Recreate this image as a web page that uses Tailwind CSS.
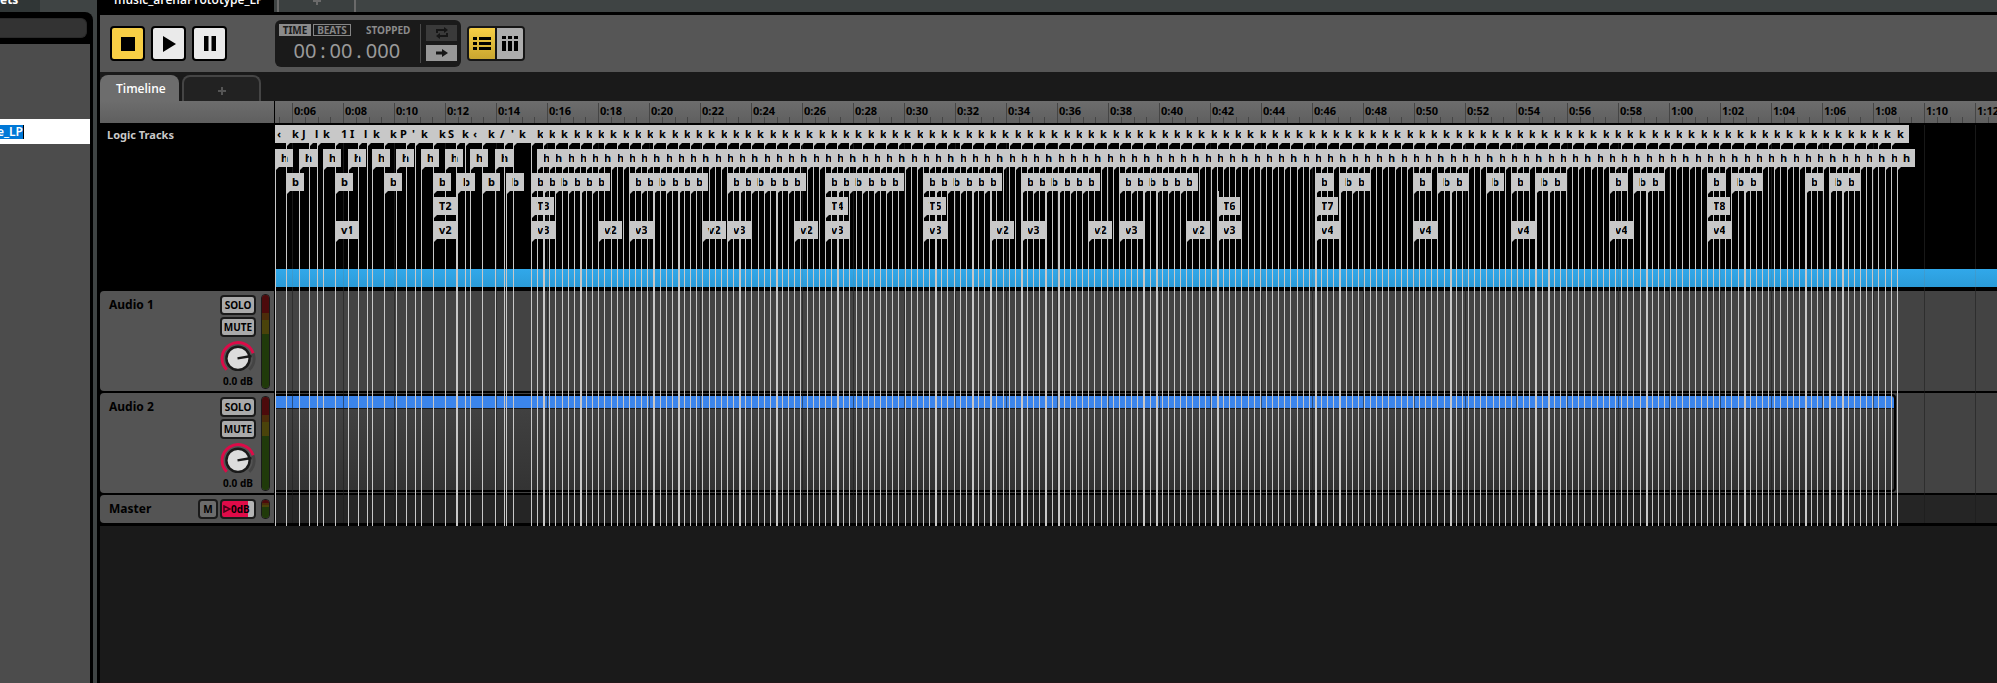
<!DOCTYPE html>
<html lang="en">
<head>
<meta charset="utf-8">
<title>Timeline editor</title>
<script src="https://cdn.jsdelivr.net/npm/@tailwindcss/browser@4"></script>
</head>
<body class="h-screen overflow-hidden bg-[#3f4444] font-['Noto_Sans','Open_Sans',sans-serif] text-xs text-black">
<div class="flex h-full">

  <!-- Browser panel -->
  <aside class="flex w-[93px] shrink-0 flex-col overflow-hidden">
    <div class="flex h-3 items-end overflow-hidden">
      <div class="flex h-3 w-10 items-end bg-[#303636] font-bold leading-4 text-white"><span class="pb-1">ets</span></div>
    </div>
    <div class="flex flex-1 flex-col rounded-tr-lg bg-black pr-[3px] pt-1.5">
      <div class="pr-[3px]"><input aria-label="Search" class="block h-5 w-full rounded-r-md border border-l-0 border-[#2a2a2a] bg-[#333] outline-none"></div>
      <div class="mt-1.5 flex-1 bg-[#4c4c4c] pt-[75px]">
        <div class="flex h-[25px] items-center bg-white">
          <div class="flex h-[14px] w-6 items-center justify-end overflow-hidden border-r border-black bg-[#0078d7] text-xs font-semibold leading-[14px] text-white"><span>e_LP</span></div>
        </div>
      </div>
    </div>
  </aside>

  <!-- Editor -->
  <main class="ml-1 flex min-w-0 flex-1 flex-col border-l-[3px] border-black bg-[#1a1a1a]">
    <div class="flex h-[15px] shrink-0 overflow-hidden border-b-[3px] border-black bg-[#3f4444]">
      <div class="flex h-3 w-[174px] items-end bg-black pl-3.5 font-['Open_Sans'] font-semibold leading-4 text-white"><span class="pb-1 text-xs">music_arenaPrototype_LP</span></div>
      <button aria-label="New event tab" class="ml-[3px] flex h-3 w-[79px] justify-center border-x-2 border-[#6a6a6a] bg-[#3b4040]">
        <svg class="h-1.5 w-2" viewBox="0 0 8 6"><path d="M3 0h2v5H3zM0 0h8v2H0z" fill="#6a6a6a"/></svg>
      </button>
    </div>

    <!-- Transport -->
    <div class="flex h-[57px] shrink-0 items-center bg-[#565656] pl-2.5">
      <div class="flex gap-1.5">
        <button aria-label="Stop" class="flex size-[35px] items-center justify-center rounded border-2 border-black bg-[#f8cf45]"><svg class="size-[14px]" viewBox="0 0 14 14"><path d="M0 0h14v14H0z"/></svg></button>
        <button aria-label="Play" class="flex size-[35px] items-center justify-center rounded border-2 border-black bg-[#eaeaea]"><svg class="size-4" viewBox="0 0 16 16"><path d="M2 0l13 8-13 8z"/></svg></button>
        <button aria-label="Pause" class="flex size-[35px] items-center justify-center rounded border-2 border-black bg-[#eaeaea]"><svg class="h-[15px] w-3" viewBox="0 0 12 15"><path d="M0 0h4.500v15H0zM7.500 0H12v15H7.500z"/></svg></button>
      </div>
      <div class="ml-12 flex h-[47px] w-[186px] rounded-md bg-[#1a1a1a] p-1">
        <div class="flex w-[142px] flex-col border-r border-[#4a4a4a]">
          <div class="flex h-3 items-center gap-0.5 text-[10px] font-bold leading-3">
            <button class="h-3 w-8 bg-[#8b8b8b] text-[#1a1a1a]">TIME</button>
            <button class="h-3 w-[38px] border border-[#858585] leading-[10px] text-[#858585]">BEATS</button>
            <span class="ml-[13px] text-[#8b8b8b]">STOPPED</span>
          </div>
          <div class="flex h-7 items-center pl-3.5 pt-0.5 text-[20px] leading-7 text-[#9a9a9a]">
            <span class="w-6 text-center">00</span><span class="w-3 text-center">:</span><span class="w-6 text-center">00</span><span class="w-3 text-center">.</span><span class="w-9 text-center">000</span>
          </div>
        </div>
        <div class="ml-[5px] flex flex-col gap-1 pt-px">
          <button aria-label="Loop" class="flex h-4 w-[31px] items-center justify-center bg-[#3a3a3a]"><svg class="h-3 w-[14px]" viewBox="0 0 14 12" fill="none" stroke="#161616" stroke-width="2"><path d="M2 6V3h8M12 6v3H4"/><path d="M9 0l4 3-4 3zM5 6L1 9l4 3z" fill="#161616" stroke="none"/></svg></button>
          <button aria-label="Follow playback" class="flex h-4 w-[31px] items-center justify-center bg-[#979797]"><svg class="h-2 w-[14px]" viewBox="0 0 14 8"><path d="M1 2.500h6V0l6 4-6 4V5.500H1z" fill="#161616"/></svg></button>
        </div>
      </div>
      <div class="ml-1.5 flex h-[35px] w-[58px] overflow-hidden rounded border-2 border-[#161616]">
        <button aria-label="List view" class="flex flex-1 items-center justify-center bg-gradient-to-b from-[#f8cf45] to-[#c9a630]"><svg class="h-[13px] w-[18px]" viewBox="0 0 18 13"><path d="M0 0h4v3H0zM6 0h12v3H6zM0 5h4v3H0zM6 5h12v3H6zM0 10h4v3H0zM6 10h12v3H6z"/></svg></button>
        <button aria-label="Column view" class="flex flex-1 items-center justify-center border-l-2 border-[#161616] bg-[#adadad]"><svg class="h-[15px] w-4" viewBox="0 0 16 15"><path d="M0 0h4v3H0zM6 0h4v3H6zM12 0h4v3h-4zM0 5h4v10H0zM6 5h4v10H6zM12 5h4v10h-4z"/></svg></button>
      </div>
    </div>

    <!-- Parameter tabs -->
    <div class="flex h-[29px] shrink-0 items-end gap-[3px]">
      <button class="flex h-[26px] w-[79px] items-center rounded-t-lg bg-[#6d6d6d] pl-4 pt-0.5 font-['Open_Sans'] text-xs font-semibold text-white">Timeline</button>
      <button aria-label="New parameter" class="flex h-[26px] w-[79px] items-center justify-center rounded-t-lg border-2 border-b-0 border-[#454545] bg-[#222]"><svg class="mt-1 size-2" viewBox="0 0 8 8"><path d="M3 0h2v3h3v2H5v3H3V5H0V3h3z" fill="#555"/></svg></button>
    </div>

    <div class="flex min-w-0">
      <!-- Track heads -->
      <div class="flex w-[175px] shrink-0 flex-col border-r border-black bg-black pb-[3px]">
        <div class="h-[22px] bg-gradient-to-b from-[#6d6d6d] to-[#5f5f5f]"></div>
        <div class="h-[168px] pl-[7px] pt-1"><h2 class="text-[11px] font-bold leading-4 text-[#c8c8c8]">Logic Tracks</h2></div>
        <div id="heads" class="flex flex-col gap-0.5"></div>
        <div class="mt-0.5 flex h-7 items-center rounded-l bg-[#545454] pl-[9px] pr-1">
          <span class="text-xs font-bold">Master</span>
          <button class="ml-auto h-5 w-5 rounded border-2 border-[#1a1a1a] bg-[#6c6c6c] text-[10px] font-bold leading-4">M</button>
          <button aria-label="Master volume" class="ml-0.5 flex h-5 w-9 items-center rounded border-2 border-[#1a1a1a] bg-gradient-to-r from-[#e00b49] from-82% to-[#b4b4b4] to-82% text-[10px] font-bold leading-4">
            <svg class="ml-px h-2 w-2 shrink-0" viewBox="0 0 8 8"><path d="M1 1l6 3-6 3z" fill="none" stroke="#4a0018" stroke-width="1.500"/></svg><span>0dB</span>
          </button>
          <div class="ml-[5px] flex h-5 w-[9px] flex-col overflow-hidden rounded-sm border border-[#1a1a1a]"><i class="h-[3px] bg-[#4c0a0c]"></i><i class="h-0.5 bg-[#4c2c0a]"></i><i class="h-0.5 bg-[#4a430a]"></i><i class="flex-1 bg-[#203a0a]"></i></div>
        </div>
      </div>

      <!-- Timeline canvas -->
      <div class="relative min-w-0 flex-1 overflow-hidden bg-black pb-[3px]">
        <div class="h-[22px] bg-gradient-to-b from-[#6d6d6d] to-[#5f5f5f]"></div>
        <div class="h-[168px] pt-[146px]"><div class="h-[18px] bg-gradient-to-b from-[#31a8ea] to-[#2b9bd8]"></div></div>
        <div class="h-[100px] bg-[#434343]"></div>
        <div class="mt-0.5 h-[100px] bg-[#434343] py-px">
          <div class="h-[98px] w-[1621px] rounded-r border-2 border-l-0 border-black bg-gradient-to-b from-[#434343] to-[#333]"><div class="h-[13px] rounded-tr-sm border-b border-[#1a1a1a] bg-[#3b85ec]"></div></div>
        </div>
        <div class="mt-0.5 h-7 bg-[#252525]"></div>
        <div id="grid" class="absolute inset-0"></div>
        <div id="flags" class="absolute inset-0"></div>
        <div id="stems" class="absolute inset-0"></div>
      </div>
    </div>
    <div class="flex-1 border-b border-[#211719]"></div>
  </main>
</div>

<script>
// Audio track heads
document.getElementById('heads').innerHTML = ['Audio 1', 'Audio 2'].map(name => `
  <section class="flex h-[100px] rounded-l bg-[#545454] pl-[9px] pr-1">
    <h3 class="mt-1.5 text-xs font-bold leading-4">${name}</h3>
    <div class="ml-auto flex w-9 flex-col items-center pt-1">
      <button class="h-5 w-9 rounded border-2 border-[#1a1a1a] bg-[#aaa] text-[10px] font-bold leading-4">SOLO</button>
      <button class="mt-0.5 h-5 w-9 rounded border-2 border-[#1a1a1a] bg-[#aaa] text-[10px] font-bold leading-4">MUTE</button>
      <svg class="mt-1 h-[31px] w-9" viewBox="0 0 36 31">
        <path d="M33.600 12.600A16.500 16.500 0 0 1 29.700 29.700" fill="none" stroke="#444" stroke-width="3"/>
        <path d="M6.300 29.700A16.500 16.500 0 1 1 33.600 12.600" fill="none" stroke="#dc0b48" stroke-width="3"/>
        <circle cx="18" cy="18" r="12" fill="#dcdcdc" stroke="#1a1a1a" stroke-width="2.500"/>
        <path d="M17.500 18L32 15.500" stroke="#1a1a1a" stroke-width="2.500"/>
      </svg>
      <span class="text-[10px] font-bold leading-5 whitespace-nowrap">0.0 dB</span>
    </div>
    <div class="ml-[5px] mt-[3px] flex h-[95px] w-[9px] flex-col overflow-hidden rounded-sm border border-[#1a1a1a]">
      <i class="h-[18px] bg-[#4c0a0c]"></i><i class="h-[7px] bg-[#4c2c0a]"></i><i class="h-[14px] bg-[#4a430a]"></i><i class="flex-1 bg-[#203a0a]"></i>
    </div>
  </section>`).join('');

// Ruler: one second is 25.5px, a labelled mark every two seconds
let grid = '';
for (let s = 4; s <= 72; s += 2) {
  const x = Math.round(17 + (s - 6) * 25.5);
  const label = Math.floor(s / 60) + ':' + String(s % 60).padStart(2, '0');
  grid += `<i class="absolute top-0.5 h-5 w-px bg-[#454545]" style="left:${x}px"></i>
    <i class="absolute top-6 bottom-[3px] w-px bg-[#777]/20" style="left:${x}px"></i>
    <i class="absolute top-[190px] bottom-[3px] w-px bg-black/40" style="left:${x}px"></i>`;
  if (s > 4) grid += `<span class="absolute top-0 text-[11px] font-bold leading-5" style="left:${x + 2}px">${label}</span>`;
  for (let m = 1; m < 4; m++)
    grid += `<i class="absolute top-4 h-1.5 w-px bg-[#454545]" style="left:${Math.round(x + m * 12.75)}px"></i>`;
}
document.getElementById('grid').innerHTML = grid;

// Markers: flags in five rows, 24px apart, each with a stem down to the master track
const rowTop = [24, 48, 72, 96, 120];
const beat = n => Math.round(256 + n * 12.249);
let flags = '', stems = '';
const box = (x, row, w) => { flags += `<i class="absolute h-[18px] bg-[#c8c8c8]" style="left:${x}px;top:${rowTop[row]}px;width:${w}px"></i>`; };
const text = (x, row, t) => { flags += `<span class="absolute text-[11px] font-bold leading-[18px]" style="left:${x}px;top:${rowTop[row]}px">${t}</span>`; };
const stem = (x, row) => {
  const y = rowTop[row] + 18;
  stems += `<i class="absolute bottom-0 w-px bg-[#c8c8c8]" style="left:${x}px;top:${y}px"></i>
    <i class="absolute size-[4px] bg-[#c8c8c8] [clip-path:polygon(0_0,100%_0,0_100%)]" style="left:${x}px;top:${y}px"></i>`;
};
const marker = (x, row, w, t) => { box(x, row, w); text(x + 6, row, t); stem(x, row); };

// Opening bars, where the first row's labels overlap
box(0, 0, 256);
[[2, '‹'], [17, 'k'], [27, 'J'], [40, 'l'], [48, 'k'], [66, '1'], [75, 'I'], [89, 'l'], [98, 'k'], [115, 'k'], [125, 'P'], [137, '\''], [146, 'k'], [164, 'k'], [173, 'S'], [187, 'k'], [198, '‹'], [213, 'k'], [225, '/'], [236, '\''], [244, 'k']]
  .forEach(([x, t]) => text(x, 0, t));
[11, 34, 42, 60, 83, 92, 109, 131, 140, 158, 181, 190, 207, 229, 238].forEach(x => stem(x, 0));
[0, 24, 48, 73, 97, 121, 146, 170, 195, 220].forEach(x => marker(x, 1, 18, 'h'));
[11, 60, 109, 158, 182, 207, 231].forEach(x => marker(x, 2, 18, 'b'));
marker(60, 4, 23, 'v1');
marker(158, 3, 23, 'T2');
marker(158, 4, 23, 'v2');

// Steady beat
for (let n = 0; n <= 111; n++) {
  marker(beat(n), 0, 18, 'k');
  marker(beat(n + 0.5), 1, 18, 'h');
}
[0, 8, 16, 24, 32, 40, 48].forEach(g => { for (let i = 0; i < 6; i++) marker(beat(g + i), 2, 18, 'b'); });
[64, 66, 67, 72, 74, 75, 78, 80, 82, 83, 88, 90, 91, 96, 98, 99, 104, 106, 107].forEach(n => marker(beat(n), 2, 18, 'b'));
[[0, 'T3'], [24, 'T4'], [32, 'T5'], [56, 'T6'], [64, 'T7'], [96, 'T8']].forEach(([n, t]) => marker(beat(n), 3, 23, t));
[[0, 'v3'], [5.5, 'v2'], [8, 'v3'], [14, 'v2'], [16, 'v3'], [21.5, 'v2'], [24, 'v3'], [32, 'v3'], [37.5, 'v2'], [40, 'v3'], [45.5, 'v2'], [48, 'v3'], [53.5, 'v2'], [56, 'v3'], [64, 'v4'], [72, 'v4'], [80, 'v4'], [88, 'v4'], [96, 'v4']]
  .forEach(([n, t]) => marker(beat(n), 4, 24, t));

[1, 4, 10, 12, 17, 20, 25, 33, 36, 37.5, 40, 42, 43, 50, 51, 56, 64, 66, 75, 82, 83, 91, 99, 104, 106, 107].forEach(n => {
  stems += `<i class="absolute bottom-0 top-[90px] w-px bg-[#c8c8c8]" style="left:${beat(n) + 1}px"></i>`;
});
document.getElementById('flags').innerHTML = flags;
document.getElementById('stems').innerHTML = stems;
</script>
</body>
</html>
